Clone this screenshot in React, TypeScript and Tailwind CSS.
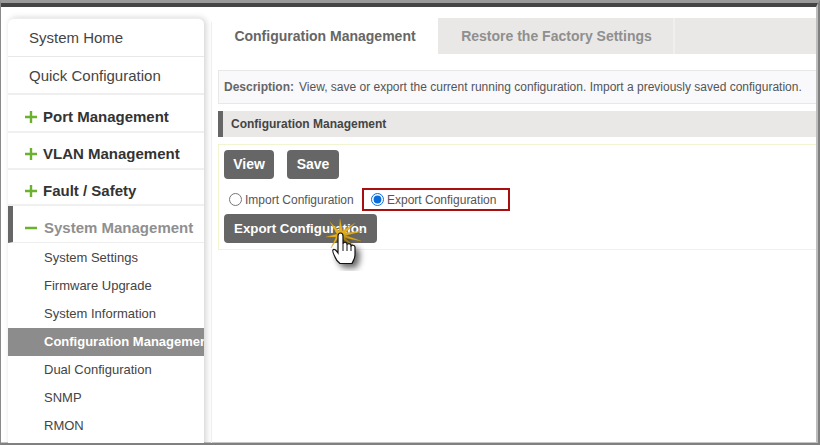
const font = "font-['Liberation_Sans',Arial,sans-serif]";

const SUB_ITEMS = ["System Settings", "Firmware Upgrade", "System Information", "Configuration Management", "Dual Configuration", "SNMP", "RMON"];

function Plus() {
  return (
    <svg width="12" height="12" viewBox="0 0 12 12" className="shrink-0">
      <path d="M0 6h12M6 0v12" stroke="#6bb02e" strokeWidth="2.4" />
    </svg>
  );
}

function Group({ label, className }: { label: string; className: string }) {
  return (
    <div className={`flex items-center pl-[17px] gap-[6px] border-b-[2px] border-[#f0f0f0] ${className}`}>
      <Plus />
      <span className="text-[15px] font-bold text-[#333]">{label}</span>
    </div>
  );
}

// burst points around the cursor tip, outer and inner radius alternate
const BURST: [number, number][] = [
  [21, 11], [30, 20], [31, 8], [33.5, 20], [46, 12], [36, 22], [54, 20], [37, 24.5],
  [52, 30], [36, 27], [46, 36], [33, 28], [29, 27], [22, 37], [27, 26], [17, 26], [28, 23],
];

function Hand() {
  return (
    <svg width="70" height="60" viewBox="0 0 70 60" className="absolute left-[308px] top-[208px]">
      <polygon points={BURST.map((p) => p.join(",")).join(" ")} fill="#e8b21a" stroke="#c4930f" strokeWidth="0.3" />
      <path
        d="M29 25C29 21 34 21 34 25V33C34 31 38 31 38 33V34C38 32 42 32 42 34.5V35.5C42 33.5 46 34 46 36V44C46 48 44 50 43 52.5H31C29 51 27 49 26 46C25 44 23 40 24 39C25 37.5 27 39 29 42Z"
        fill="#fff"
        stroke="#111"
        strokeWidth="1.2"
        style={{ filter: "drop-shadow(4px 4px 3px rgba(0,0,0,0.6))" }}
      />
      <path d="M34 33V40M38 34V40M42 35V40" stroke="#111" strokeWidth="1" fill="none" />
    </svg>
  );
}

export default function App() {
  return (
    <div className={`${font} relative w-[820px] h-[445px] overflow-hidden border-t-[3px] border-t-[#9a9a9a] border-l border-l-[#8a8a8a] border-r-[2px] border-r-[#808080] border-b-[2px] border-b-[#808080]`}>
      <div className="h-full bg-white border-t-[4px] border-t-[#444] border-r-[2px] border-r-[#bdbdbd] border-b border-b-[#c4c4c4]">
        <div className="flex h-full pl-[7px] pt-[11px] gap-[7px]">
          {/* Sidebar */}
          <aside className="w-[196px] shrink-0 h-[430px] overflow-hidden bg-white rounded-t-md border-t border-[#eee] shadow-[2px_0_6px_rgba(0,0,0,0.18)]">
            <div className="h-[38px] flex items-center pl-[21px] pt-[2px] border-b border-[#e8e8e8] text-[15px] text-[#444]">System Home</div>
            <div className="h-[38px] flex items-center pl-[21px] pt-[2px] border-b-[2px] border-[#eee] text-[15px] text-[#444]">Quick Configuration</div>
            <Group label="Port Management" className="h-[38px] pt-[8px]" />
            <Group label="VLAN Management" className="h-[37px] pt-[7px]" />
            <Group label="Fault / Safety" className="h-[36px] pt-[8px]" />
            <div className="h-[37px] flex items-center gap-[7px] pl-[12px] pt-[8px] border-b border-[#eee] border-l-[5px] border-l-[#666]">
              <svg width="12" height="12" viewBox="0 0 12 12" className="shrink-0">
                <path d="M0 6h12" stroke="#6bb02e" strokeWidth="2.4" />
              </svg>
              <span className="text-[15px] font-bold text-[#8f8f8f]">System Management</span>
            </div>
            <div className="pt-[1px]">
              {SUB_ITEMS.map((s) => (
                <div
                  key={s}
                  className={`h-[28px] flex items-center pl-[36px] text-[13px] whitespace-nowrap overflow-hidden ${
                    s === "Configuration Management" ? "bg-[#8c8c8c] text-white font-bold" : "text-[#444]"
                  }`}
                >
                  {s}
                </div>
              ))}
            </div>
          </aside>

          {/* Main panel */}
          <main className="flex-1 min-w-0 h-[430px] rounded-t-md border-l border-[#eee]">
            <div className="flex h-[36px] bg-[#e9e8e6] text-[14px] font-bold">
              <div className="w-[226px] bg-white flex items-center justify-center text-[#666]">Configuration Management</div>
              <div className="w-[237px] flex items-center justify-center pl-[2px] text-[#8f8f8f] border-r-[2px] border-[#f0efed]">Restore the Factory Settings</div>
            </div>
            <div className="pl-[6px]">
              <div className="mt-[16px] h-[34px] flex items-center pl-[5px] gap-[5px] whitespace-nowrap overflow-hidden bg-[#f9f9fb] border-y border-l border-[#e8e8e8] text-[12px] text-[#555]">
                <b className="text-[#666]">Description:</b>
                <span>View, save or export the current running configuration. Import a previously saved configuration.</span>
              </div>
              <div className="mt-[7px] h-[26px] flex items-center pl-[8px] bg-[#e9e8e6] border-l-[5px] border-[#666] text-[12px] font-bold text-[#444]">Configuration Management</div>
              <div className="mt-[7px] h-[106px] px-[5px] pt-[5px] border-y border-l border-[#f2f5cf]">
                <div className="flex gap-[13px]">
                  <button className="w-[50px] h-[29px] rounded-[4px] bg-[#666] text-white text-[14px] font-bold">View</button>
                  <button className="w-[52px] h-[29px] rounded-[4px] bg-[#666] text-white text-[14px] font-bold">Save</button>
                </div>
                <div className="flex items-center h-[23px] mt-[9px] text-[12px] text-[#555]">
                  <label className="flex items-center w-[138px] pl-[5px] gap-[3px]">
                    <input type="radio" name="cfg" className="w-[13px] h-[13px] m-0" />
                    Import Configuration
                  </label>
                  <label className="flex items-center w-[148px] h-[23px] pl-[7px] gap-[3px] border-[2px] border-[#a80f0f]">
                    <input type="radio" name="cfg" defaultChecked className="w-[13px] h-[13px] m-0 -mt-[1px] accent-[#0a6cdc]" />
                    Export Configuration
                  </label>
                </div>
                <button className="mt-[3px] w-[153px] h-[29px] rounded-[4px] bg-[#666] text-white text-[13.3px] font-bold">Export Configuration</button>
              </div>
            </div>
          </main>
        </div>
      </div>
      <Hand />
    </div>
  );
}
